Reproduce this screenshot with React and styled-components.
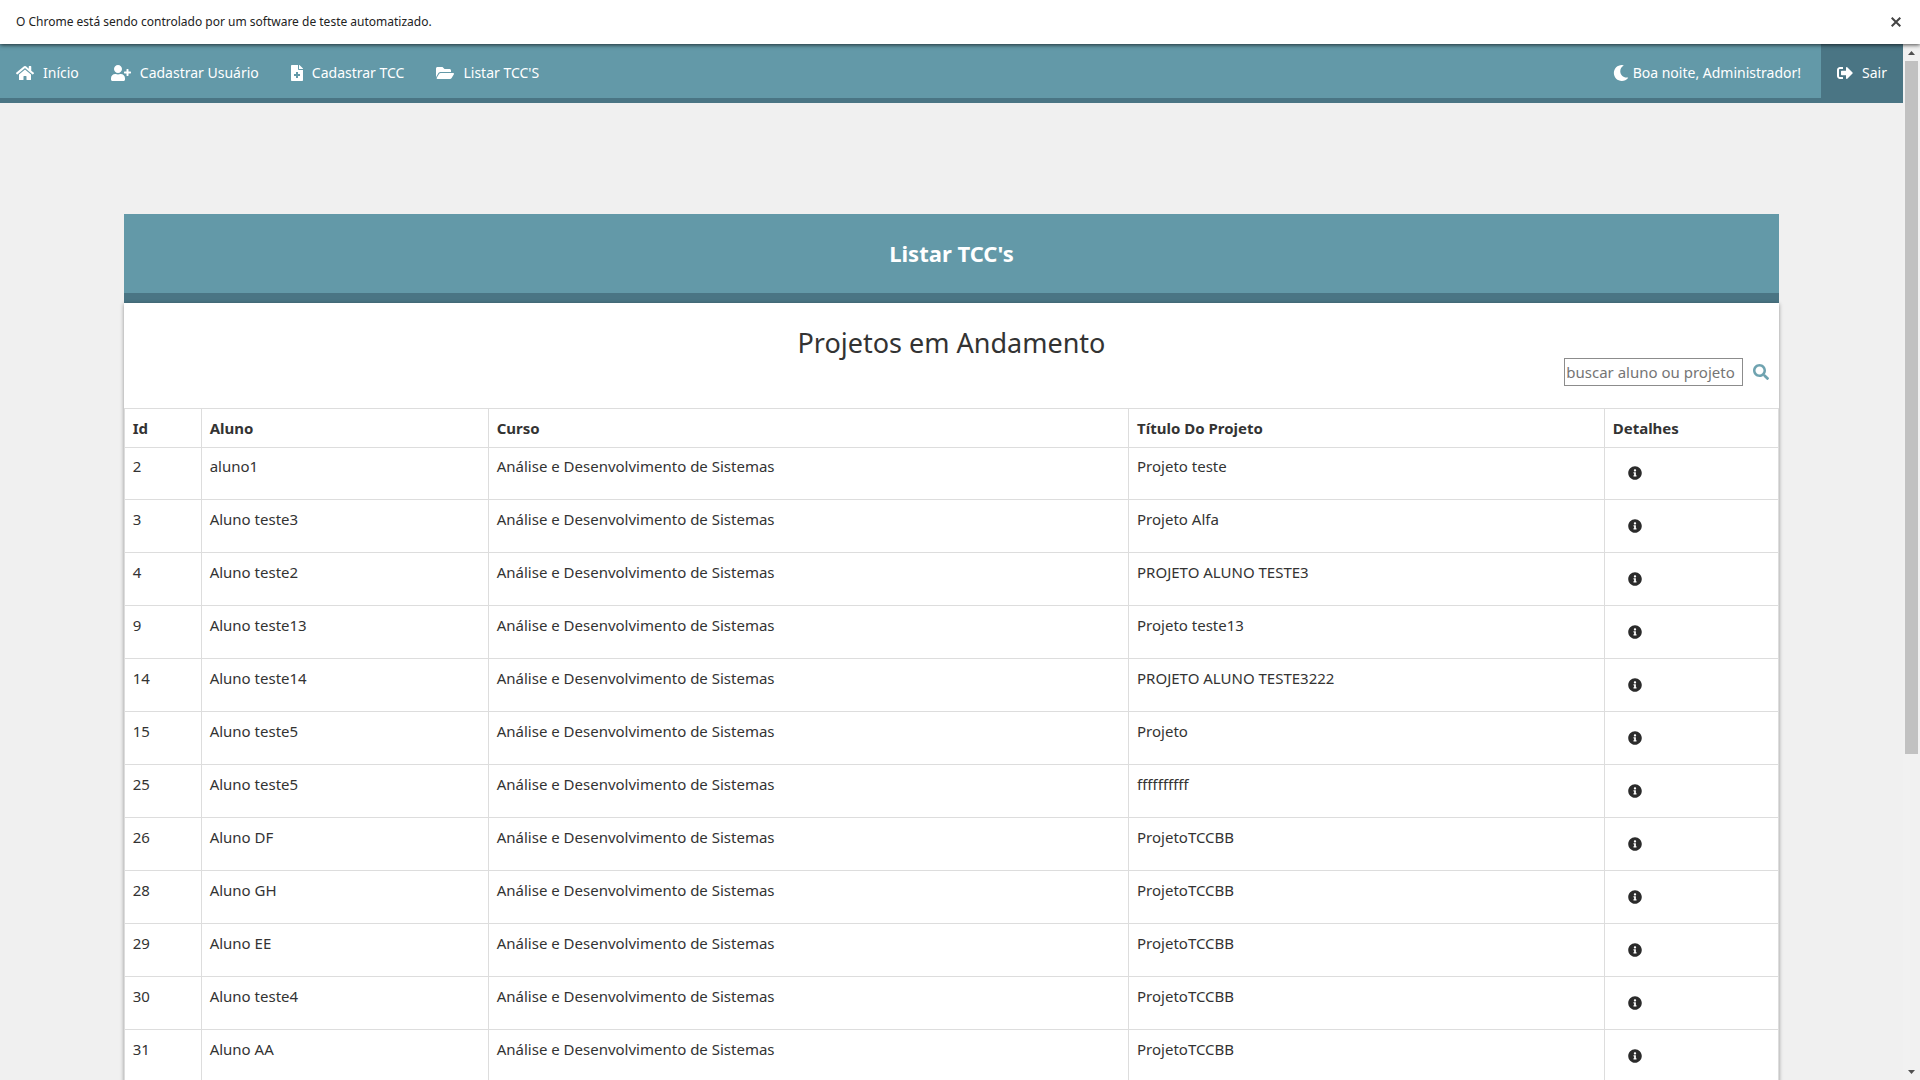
import React from "react";
import styled, { createGlobalStyle } from "styled-components";
import {
  FaHome,
  FaUserPlus,
  FaFileMedical,
  FaFolderOpen,
  FaMoon,
  FaSignOutAlt,
  FaSearch,
  FaInfoCircle,
} from "react-icons/fa";

const teal = "#6399a8";
const tealDark = "#4a7584";
const line = "#dddddd";
const sans = `"Noto Sans", "Open Sans", sans-serif`;

const GlobalStyle = createGlobalStyle`
  * { box-sizing: border-box; }
  body { margin: 0; background: #f0f0f0; color: #333; font: 15px/20px ${sans}; }
  button, input { font: inherit; }
`;

const Window = styled.div`
  display: flex;
  flex-direction: column;
  height: 100vh;
`;

const InfoBar = styled.header`
  display: flex;
  align-items: center;
  justify-content: space-between;
  height: 44px;
  padding: 0 16px;
  background: #fff;
  color: #222;
  font: 12px/20px ${sans};
  box-shadow: 0 1px 4px rgba(0, 0, 0, 0.7);
  z-index: 1;
`;

const CloseButton = styled.button`
  display: flex;
  padding: 3px;
  border: 0;
  background: none;
  color: #444;
`;

const Viewport = styled.div`
  display: flex;
  flex: 1;
  min-height: 0;
`;

const Page = styled.div`
  flex: 1;
  overflow-y: auto;
  scrollbar-width: none;
`;

const NavBar = styled.nav`
  display: flex;
  height: 59px;
  border-bottom: 5px solid ${tealDark};
  background: ${teal};
  color: #fff;
  font: 14px/24px ${sans};
  white-space: nowrap;
`;

const NavLink = styled.a`
  display: flex;
  align-items: center;
  gap: 9px;
  padding: 4px 16px 0;
  color: inherit;
  text-decoration: none;
  background: ${(p) => (p.$dark ? tealDark : "transparent")};
`;

const NavIcon = styled.span`
  display: flex;
  justify-content: center;
  width: ${(p) => p.$width}px;
  svg { flex: none; }
`;

const Greeting = styled.span`
  display: flex;
  align-items: center;
  gap: 4px;
  margin-left: auto;
  padding: 4px 20px 0 0;
`;

const Card = styled.main`
  width: 87%;
  margin: 111px auto 64px;
`;

const CardHeader = styled.header`
  display: flex;
  align-items: center;
  justify-content: center;
  height: 89px;
  padding-bottom: 2px;
  border-bottom: 10px solid ${tealDark};
  background: ${teal};
  color: #fff;
`;

const CardBody = styled.section`
  background: #fff;
  box-shadow: 0 1px 4px rgba(0, 0, 0, 0.4);
`;

const CardTitle = styled.h1`
  margin: 0;
  font-size: 22px;
  line-height: 32px;
`;

const Subtitle = styled.h2`
  margin: 0;
  padding-top: 20px;
  font-size: 27px;
  font-weight: 400;
  line-height: 40px;
  text-align: center;
`;

const SearchForm = styled.form`
  display: flex;
  align-items: center;
  justify-content: flex-end;
  gap: 10px;
  height: 18px;
  padding-right: 10px;
  margin-bottom: 27px;
`;

const SearchInput = styled.input`
  width: 179px;
  height: 28px;
  padding: 1px;
  border: 1px solid #8c8c8c;
  border-radius: 0;
  &::placeholder { color: #757575; }
`;

const IconButton = styled.button`
  display: flex;
  padding: 0;
  border: 0;
  background: none;
  color: ${(p) => p.$color};
`;

const Table = styled.table`
  width: 100%;
  table-layout: fixed;
  border-collapse: collapse;
  border: 1px solid ${line};
`;

const Col = styled.col`
  width: ${(p) => p.$width};
`;

const HeadCell = styled.th`
  height: 39px;
  padding: 0 8px;
  border: 1px solid ${line};
  text-align: left;
`;

const Cell = styled.td`
  height: 53px;
  padding: 9px 8px 8px;
  border: 1px solid ${line};
  vertical-align: top;
  tr:first-child > & {
    height: 52px;
    padding-top: 8px;
  }
`;

const DetailsButton = styled(IconButton)`
  padding: 10px 15px 8px;
`;

const ScrollBar = styled.div`
  display: flex;
  flex-direction: column;
  width: 17px;
  padding: 0 2px;
  background: #f1f1f1;
`;

const ScrollArrow = styled.button`
  display: flex;
  align-items: center;
  justify-content: center;
  height: 17px;
  padding: 0;
  border: 0;
  background: none;
`;

const ScrollTrack = styled.div`
  flex: 1;
`;

const ScrollThumb = styled.div`
  height: 69.2%;
  background: #c1c1c1;
`;

const curso = "Análise e Desenvolvimento de Sistemas";

const rows = [
  [2, "aluno1", "Projeto teste"],
  [3, "Aluno teste3", "Projeto Alfa"],
  [4, "Aluno teste2", "PROJETO ALUNO TESTE3"],
  [9, "Aluno teste13", "Projeto teste13"],
  [14, "Aluno teste14", "PROJETO ALUNO TESTE3222"],
  [15, "Aluno teste5", "Projeto"],
  [25, "Aluno teste5", "ffffffffff"],
  [26, "Aluno DF", "ProjetoTCCBB"],
  [28, "Aluno GH", "ProjetoTCCBB"],
  [29, "Aluno EE", "ProjetoTCCBB"],
  [30, "Aluno teste4", "ProjetoTCCBB"],
  [31, "Aluno AA", "ProjetoTCCBB"],
];

const columns = [
  ["Id", "4.65%"],
  ["Aluno", "17.35%"],
  ["Curso", "38.7%"],
  ["Título Do Projeto", "28.75%"],
  ["Detalhes", "10.55%"],
];

export default function App() {
  return (
    <Window>
      <GlobalStyle />
      <InfoBar>
        <span>O Chrome está sendo controlado por um software de teste automatizado.</span>
        <CloseButton type="button" aria-label="Fechar">
          <svg width="10" height="10" viewBox="0 0 10 10" stroke="currentColor" strokeWidth="2">
            <path d="M.7.7l8.6 8.6M9.3.7L.7 9.3" />
          </svg>
        </CloseButton>
      </InfoBar>
      <Viewport>
        <Page>
          <NavBar>
            <NavLink href="#inicio"><NavIcon $width={18}><FaHome size={18} /></NavIcon>Início</NavLink>
            <NavLink href="#usuario"><NavIcon $width={20}><FaUserPlus size={20} /></NavIcon>Cadastrar Usuário</NavLink>
            <NavLink href="#tcc"><NavIcon $width={12}><FaFileMedical size={16} /></NavIcon>Cadastrar TCC</NavLink>
            <NavLink href="#lista"><NavIcon $width={18}><FaFolderOpen size={18} /></NavIcon>Listar TCC'S</NavLink>
            <Greeting><FaMoon size={16} />Boa noite, Administrador!</Greeting>
            <NavLink href="#sair" $dark><NavIcon $width={16}><FaSignOutAlt size={16} /></NavIcon>Sair</NavLink>
          </NavBar>
          <Card>
            <CardHeader><CardTitle>Listar TCC's</CardTitle></CardHeader>
            <CardBody>
              <Subtitle>Projetos em Andamento</Subtitle>
              <SearchForm>
                <SearchInput type="text" aria-label="buscar aluno ou projeto" placeholder="buscar aluno ou projeto" />
                <IconButton type="button" aria-label="Buscar" $color="#6fa3b0"><FaSearch size={16} /></IconButton>
              </SearchForm>
              <Table>
                <colgroup>
                  {columns.map(([name, width]) => <Col key={name} $width={width} />)}
                </colgroup>
                <thead>
                  <tr>{columns.map(([name]) => <HeadCell key={name} scope="col">{name}</HeadCell>)}</tr>
                </thead>
                <tbody>
                  {rows.map(([id, aluno, titulo]) => (
                    <tr key={id}>
                      <Cell>{id}</Cell>
                      <Cell>{aluno}</Cell>
                      <Cell>{curso}</Cell>
                      <Cell>{titulo}</Cell>
                      <Cell>
                        <DetailsButton type="button" aria-label="Detalhes" $color="#2b2b2b">
                          <FaInfoCircle size={14} />
                        </DetailsButton>
                      </Cell>
                    </tr>
                  ))}
                </tbody>
              </Table>
            </CardBody>
          </Card>
        </Page>
        <ScrollBar>
          <ScrollArrow type="button" aria-label="Rolar para cima">
            <svg width="7" height="4" viewBox="0 0 7 4" fill="#505050"><path d="M0 4L3.5 0L7 4z" /></svg>
          </ScrollArrow>
          <ScrollTrack><ScrollThumb /></ScrollTrack>
          <ScrollArrow type="button" aria-label="Rolar para baixo">
            <svg width="7" height="4" viewBox="0 0 7 4" fill="#505050"><path d="M0 0L3.5 4L7 0z" /></svg>
          </ScrollArrow>
        </ScrollBar>
      </Viewport>
    </Window>
  );
}
